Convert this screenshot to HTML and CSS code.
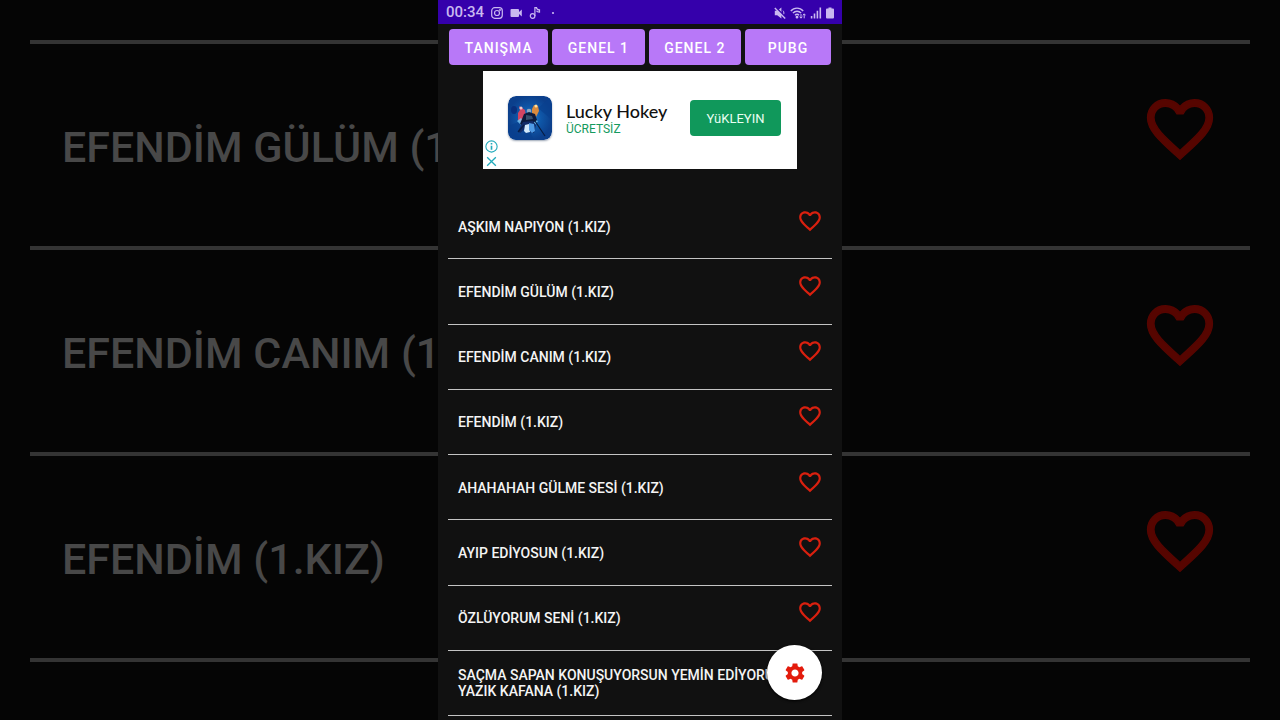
FILE: index.html
```html
<!DOCTYPE html>
<html lang="tr">
<head>
<meta charset="utf-8">
<meta name="viewport" content="width=device-width, initial-scale=1">
<title>Ses Listesi</title>
<link rel="stylesheet" href="styles.css">
</head>
<body>
<svg class="defs" aria-hidden="true">
  <symbol id="heart" viewBox="0 0 24 24"><path d="M16.500 3c-1.740 0-3.410.81-4.500 2.090C10.910 3.810 9.240 3 7.500 3 4.420 3 2 5.420 2 8.500c0 3.780 3.400 6.860 8.550 11.540L12 21.350l1.450-1.320C18.600 15.360 22 12.280 22 8.500 22 5.420 19.580 3 16.500 3zm-4.400 15.550l-.1.100-.1-.1C7.140 14.240 4 11.390 4 8.500 4 6.500 5.500 5 7.500 5c1.540 0 3.040.99 3.570 2.360h1.870C13.460 5.990 14.960 5 16.500 5c2 0 3.500 1.500 3.500 3.500 0 2.890-3.140 5.740-7.900 10.050z"/></symbol>
</svg>
<div class="stage">
  <div class="backdrop" aria-hidden="true">
    <div class="backdrop-row"><span class="backdrop-name">EFENDİM GÜLÜM (1.KIZ)</span><svg class="backdrop-heart"><use href="#heart"/></svg></div>
    <div class="backdrop-row"><span class="backdrop-name">EFENDİM CANIM (1.KIZ)</span><svg class="backdrop-heart"><use href="#heart"/></svg></div>
    <div class="backdrop-row"><span class="backdrop-name">EFENDİM (1.KIZ)</span><svg class="backdrop-heart"><use href="#heart"/></svg></div>
    <div class="backdrop-end"></div>
  </div>

  <main class="phone">
    <header class="status">
      <div class="status-group">
        <span class="clock">00:34</span>
        <svg class="status-icon" viewBox="0 0 12 12" fill="none" stroke="currentColor" stroke-width="1.200"><rect x="0.700" y="0.700" width="10.600" height="10.600" rx="3"/><circle cx="6" cy="6" r="2.500"/><circle cx="9" cy="3" r=".4"/></svg>
        <svg class="status-icon" viewBox="0 0 12 12" fill="currentColor"><path d="M1.500 2h6.500a1 1 0 0 1 1 1v2l2.800-2.400v6.800L9 7v2a1 1 0 0 1-1 1H1.500a1 1 0 0 1-1-1V3a1 1 0 0 1 1-1z"/></svg>
        <svg class="status-icon" viewBox="0 0 12 12" fill="none" stroke="currentColor" stroke-width="1.200"><circle cx="3.600" cy="9" r="2.300"/><path d="M5.900 9V.6h1.600c.2 1.600 1.200 2.300 3 2.300v2.200c-1.700 0-2.700-.6-3-1.400"/></svg>
        <svg class="status-icon" viewBox="0 0 12 12" fill="currentColor"><circle cx="5" cy="6" r="1.100"/></svg>
      </div>
      <div class="status-group status-right">
        <svg class="status-icon" viewBox="0 0 12 12" fill="currentColor"><path d="M.8 3.800h2.400L7.400.4v11L3.200 8.200H.8z"/><path d="M9 3.700c1.200 1 1.200 3.600 0 4.600" fill="none" stroke="currentColor"/><path d="M2 .6l9.600 9.600" stroke="#3500ab" stroke-width="1.600"/><path d="M.8 1l10.400 10.400" stroke="currentColor" stroke-width="1.400"/></svg>
        <svg class="wifi-icon" viewBox="0 0 16 12" fill="none" stroke="currentColor" stroke-width="1.400"><path d="M.8 4c3.300-3.800 9.100-3.800 12.400 0M2.900 6.100c2.300-2.500 6-2.500 8.200 0M5 8.200c1.200-1.300 2.900-1.300 4 0"/><circle cx="7" cy="10.200" r=".7" fill="currentColor"/><path d="M11 7v4m-1.300-1.300 1.300 1.500 1.300-1.500M14.200 11.300V7m-1.300 1.300L14.200 6.800l1.300 1.500" stroke-width="1"/></svg>
        <svg class="status-icon" viewBox="0 0 12 12" fill="currentColor"><path d="M.8 9h1.600v2.500H.8zM3.700 6.500h1.600v5H3.700zM6.600 3.700h1.600v7.800H6.600zM9.500.5h1.600v11H9.500z"/></svg>
        <svg class="battery-icon" viewBox="0 0 8 12" fill="currentColor"><path d="M2.500.5h3v1H7a1 1 0 0 1 1 1v8a1 1 0 0 1-1 1H1a1 1 0 0 1-1-1v-8a1 1 0 0 1 1-1h1.500z"/></svg>
      </div>
    </header>

    <nav class="tabs">
      <button class="tab" type="button">TANIŞMA</button>
      <button class="tab" type="button">GENEL 1</button>
      <button class="tab" type="button">GENEL 2</button>
      <button class="tab" type="button">PUBG</button>
    </nav>

    <aside class="ad">
      <div class="ad-choices">
        <button type="button" class="ad-choice" aria-label="Reklam bilgisi"><svg viewBox="0 0 12 12" fill="none" stroke="currentColor"><circle cx="6" cy="6" r="5.200"/><path d="M6 5.200v3.800M6 2.700v1.500" stroke-width="1.500"/></svg></button>
        <button type="button" class="ad-choice" aria-label="Reklamı kapat"><svg viewBox="0 0 12 12" fill="none" stroke="currentColor" stroke-width="1.200"><path d="M2 2l8 8M10 2l-8 8"/></svg></button>
      </div>
      <svg class="app-icon" viewBox="0 0 44 44" aria-hidden="true">
        <defs>
          <radialGradient id="ice"><stop offset="0" stop-color="#2184d6"/><stop offset=".5" stop-color="#0f57a8"/><stop offset="1" stop-color="#0b3f8c"/></radialGradient>
          <clipPath id="tile"><rect width="44" height="44" rx="8"/></clipPath>
        </defs>
        <g clip-path="url(#tile)">
          <rect width="44" height="44" fill="url(#ice)"/>
          <path d="M0 30l16-6 10 20H0zM44 0L30 12l14 12z" fill="#09408f" opacity=".7"/>
          <ellipse cx="6" cy="14" rx="3" ry="4" fill="#092f7d"/>
          <path d="M10 17l2-3-1-4 3 2 3 2 1 7-4 5-4-2z" fill="#d34563"/>
          <circle cx="13" cy="12" r="1.600" fill="#f1c5c8"/>
          <path d="M24 13l2-4 4 1 1 5-3 6-4-3z" fill="#d88b3e"/>
          <circle cx="28" cy="10" r="1.500" fill="#ffe0a0"/>
          <path d="M9 25l4-3 3 4 8-3 6 2-3 4-12 2z" fill="#7fc9f5" opacity=".8"/>
          <circle cx="21" cy="15" r="2.300" fill="#8fa6c0"/>
          <path d="M16 18l5-2 6 2 2 6-4 3-8-1-2 4-3-2z" fill="#0b1a3c"/>
          <path d="M18 19l6 1 1 3-7 1z" fill="#35506e"/>
          <path d="M15 26l10-1 3 4-2 8-5-1-3-4-6 5-2-2z" fill="#112b67"/>
          <path d="M17 29l4-1 1 8-4 1-2-2z" fill="#d1e9fb"/>
          <path d="M21 27l5 1 1 7-3 2-3-3z" fill="#4f9be6"/>
          <path d="M27 25l10 15M10 36l6-7" stroke="#071d44" stroke-width="1.200"/>
        </g>
      </svg>
      <div class="ad-text">
        <span class="ad-title">Lucky Hokey</span>
        <span class="ad-price">ÜCRETSİZ</span>
      </div>
      <button class="install" type="button">YüKLEYIN</button>
    </aside>

    <ul class="sounds">
      <li class="sound"><span class="sound-name">AŞKIM NAPIYON (1.KIZ)</span><button class="like" type="button" aria-label="Favorilere ekle"><svg><use href="#heart"/></svg></button></li>
      <li class="sound"><span class="sound-name">EFENDİM GÜLÜM (1.KIZ)</span><button class="like" type="button" aria-label="Favorilere ekle"><svg><use href="#heart"/></svg></button></li>
      <li class="sound"><span class="sound-name">EFENDİM CANIM (1.KIZ)</span><button class="like" type="button" aria-label="Favorilere ekle"><svg><use href="#heart"/></svg></button></li>
      <li class="sound"><span class="sound-name">EFENDİM (1.KIZ)</span><button class="like" type="button" aria-label="Favorilere ekle"><svg><use href="#heart"/></svg></button></li>
      <li class="sound"><span class="sound-name">AHAHAHAH GÜLME SESİ (1.KIZ)</span><button class="like" type="button" aria-label="Favorilere ekle"><svg><use href="#heart"/></svg></button></li>
      <li class="sound"><span class="sound-name">AYIP EDİYOSUN (1.KIZ)</span><button class="like" type="button" aria-label="Favorilere ekle"><svg><use href="#heart"/></svg></button></li>
      <li class="sound"><span class="sound-name">ÖZLÜYORUM SENİ (1.KIZ)</span><button class="like" type="button" aria-label="Favorilere ekle"><svg><use href="#heart"/></svg></button></li>
      <li class="sound"><span class="sound-name">SAÇMA SAPAN KONUŞUYORSUN YEMİN EDİYORUM YAZIK KAFANA (1.KIZ)</span><button class="like" type="button" aria-label="Favorilere ekle"><svg><use href="#heart"/></svg></button></li>
    </ul>

    <button class="fab" type="button" aria-label="Ayarlar">
      <svg viewBox="0 0 24 24" fill="currentColor"><path d="M19.140 12.940c.04-.3.060-.61.060-.94 0-.32-.02-.64-.07-.94l2.030-1.580c.18-.14.230-.41.120-.61l-1.920-3.320c-.12-.22-.37-.29-.59-.22l-2.390.96c-.5-.38-1.030-.7-1.620-.94l-.36-2.540c-.04-.24-.24-.41-.48-.41h-3.840c-.24 0-.43.170-.47.410l-.36 2.540c-.59.240-1.130.57-1.620.94l-2.390-.96c-.22-.08-.47 0-.59.220L2.740 8.870c-.12.210-.08.470.12.610l2.030 1.580c-.05.300-.09.630-.09.940s.02.640.07.940l-2.030 1.580c-.18.140-.23.410-.12.610l1.920 3.320c.12.220.37.290.59.220l2.390-.96c.5.380 1.030.7 1.620.94l.36 2.540c.05.240.24.410.48.410h3.840c.24 0 .44-.17.470-.41l.36-2.540c.59-.24 1.130-.56 1.620-.94l2.390.96c.22.080.47 0 .59-.22l1.920-3.320c.12-.22.070-.47-.12-.61l-2.010-1.580zM12 15.600c-1.980 0-3.600-1.620-3.600-3.600s1.620-3.600 3.600-3.600 3.600 1.620 3.600 3.600-1.620 3.600-3.600 3.600z"/></svg>
    </button>
  </main>
</div>
</body>
</html>
```

FILE: styles.css
```css
* { box-sizing: border-box; }

body {
  margin: 0;
  background: #050505;
  font-family: Roboto, "Liberation Sans", sans-serif;
}

button {
  border: 0;
  padding: 0;
  font: inherit;
  cursor: pointer;
}

svg { display: block; }

.defs {
  position: absolute;
  width: 0;
  height: 0;
}

.stage {
  display: grid;
  height: 100vh;
  min-height: 720px;
  overflow: hidden;
}

/* Enlarged, dimmed copy of the list behind the phone */
.backdrop {
  grid-area: 1 / 1;
  padding: 40px 30px 0;
  color: #484848;
  font-size: 43px;
  font-weight: 500;
}

.backdrop-row {
  display: flex;
  align-items: center;
  justify-content: space-between;
  height: 206px;
  padding: 3px 31px 0 32px;
  border-top: 4px solid #343434;
}

/* Names stop at the phone's left edge */
.backdrop-name {
  width: calc(50vw - 264px);
  overflow: hidden;
  white-space: nowrap;
}

.backdrop-heart {
  width: 78px;
  height: 78px;
  margin-bottom: 36px;
  fill: #560500;
  stroke: #560500;
  stroke-width: 0.400px;
}

.backdrop-end { border-top: 4px solid #343434; }

.phone {
  grid-area: 1 / 1;
  justify-self: center;
  position: relative;
  display: flex;
  flex-direction: column;
  width: 100%;
  max-width: 404px;
  padding-bottom: 4px;
  background: #111;
  color: #f4f4f4;
}

.status {
  display: flex;
  justify-content: space-between;
  align-items: center;
  height: 24px;
  padding: 1px 8px 0;
  background: #3500ab;
  color: #c9b8f0;
}

.status-group {
  display: flex;
  align-items: center;
  gap: 7px;
}

.status-right { gap: 4px; }

.clock {
  font-size: 15px;
  line-height: 23px;
  font-weight: 500;
}

.status-icon {
  width: 12px;
  height: 12px;
}

.wifi-icon {
  width: 16px;
  height: 12px;
}

.battery-icon {
  width: 8px;
  height: 12px;
}

.tabs {
  display: flex;
  gap: 4px;
  padding: 5px 11px 6px;
}

.tab {
  flex: 1 1 auto;
  height: 36px;
  padding: 1px 0 0;
  border-radius: 4px;
  background: #b878f8;
  color: #fff;
  font-size: 14px;
  font-weight: 500;
  letter-spacing: 1px;
}

.tab:last-child { flex: 0 0 86px; }

.ad {
  display: flex;
  align-items: center;
  align-self: center;
  width: 314px;
  height: 98px;
  margin-bottom: 25px;
  padding: 0 16px 0 2px;
  background: #fff;
}

.ad-choices {
  display: flex;
  flex-direction: column;
  align-self: flex-end;
  gap: 2px;
  padding-bottom: 1px;
}

.ad-choice {
  width: 13px;
  height: 13px;
  background: none;
  color: #22aabb;
}

.app-icon {
  width: 44px;
  height: 44px;
  margin: 0 14px 4px 10px;
  border-radius: 8px;
  box-shadow: 0 1px 2px #9aa4b4;
}

.ad-text {
  display: flex;
  flex: 1;
  flex-direction: column;
  padding-bottom: 3px;
  font-family: Lato, sans-serif;
}

.ad-title {
  color: #111;
  font-size: 18px;
  line-height: 20px;
  font-weight: 500;
}

.ad-price {
  color: #159a5e;
  font-family: Roboto, sans-serif;
  font-size: 12px;
  line-height: 16px;
}

.install {
  width: 91px;
  height: 36px;
  margin-bottom: 4px;
  border-radius: 4px;
  background: #10985b;
  color: #e8fff2;
  font-size: 13px;
}

.sounds {
  display: flex;
  flex: 1;
  flex-direction: column;
  margin: 0;
  padding: 0 10px;
  list-style: none;
}

.sound {
  display: flex;
  flex: 1;
  align-items: center;
  justify-content: space-between;
  gap: 8px;
  padding: 1px 9px 0 10px;
  border-bottom: 1px solid #c4c4c4;
}

.sound-name {
  font-size: 14px;
  line-height: 16px;
  font-weight: 500;
}

.like {
  flex: none;
  width: 26px;
  height: 26px;
  margin-bottom: 12px;
  background: none;
}

.like svg {
  width: 26px;
  height: 26px;
  fill: #d9200f;
}

.fab {
  position: absolute;
  right: 20px;
  bottom: 20px;
  display: grid;
  place-items: center;
  width: 55px;
  height: 55px;
  border-radius: 50%;
  background: #fff;
  color: #e31b0c;
  box-shadow: 0 1px 3px #000;
}

.fab svg {
  width: 24px;
  height: 24px;
}
```
